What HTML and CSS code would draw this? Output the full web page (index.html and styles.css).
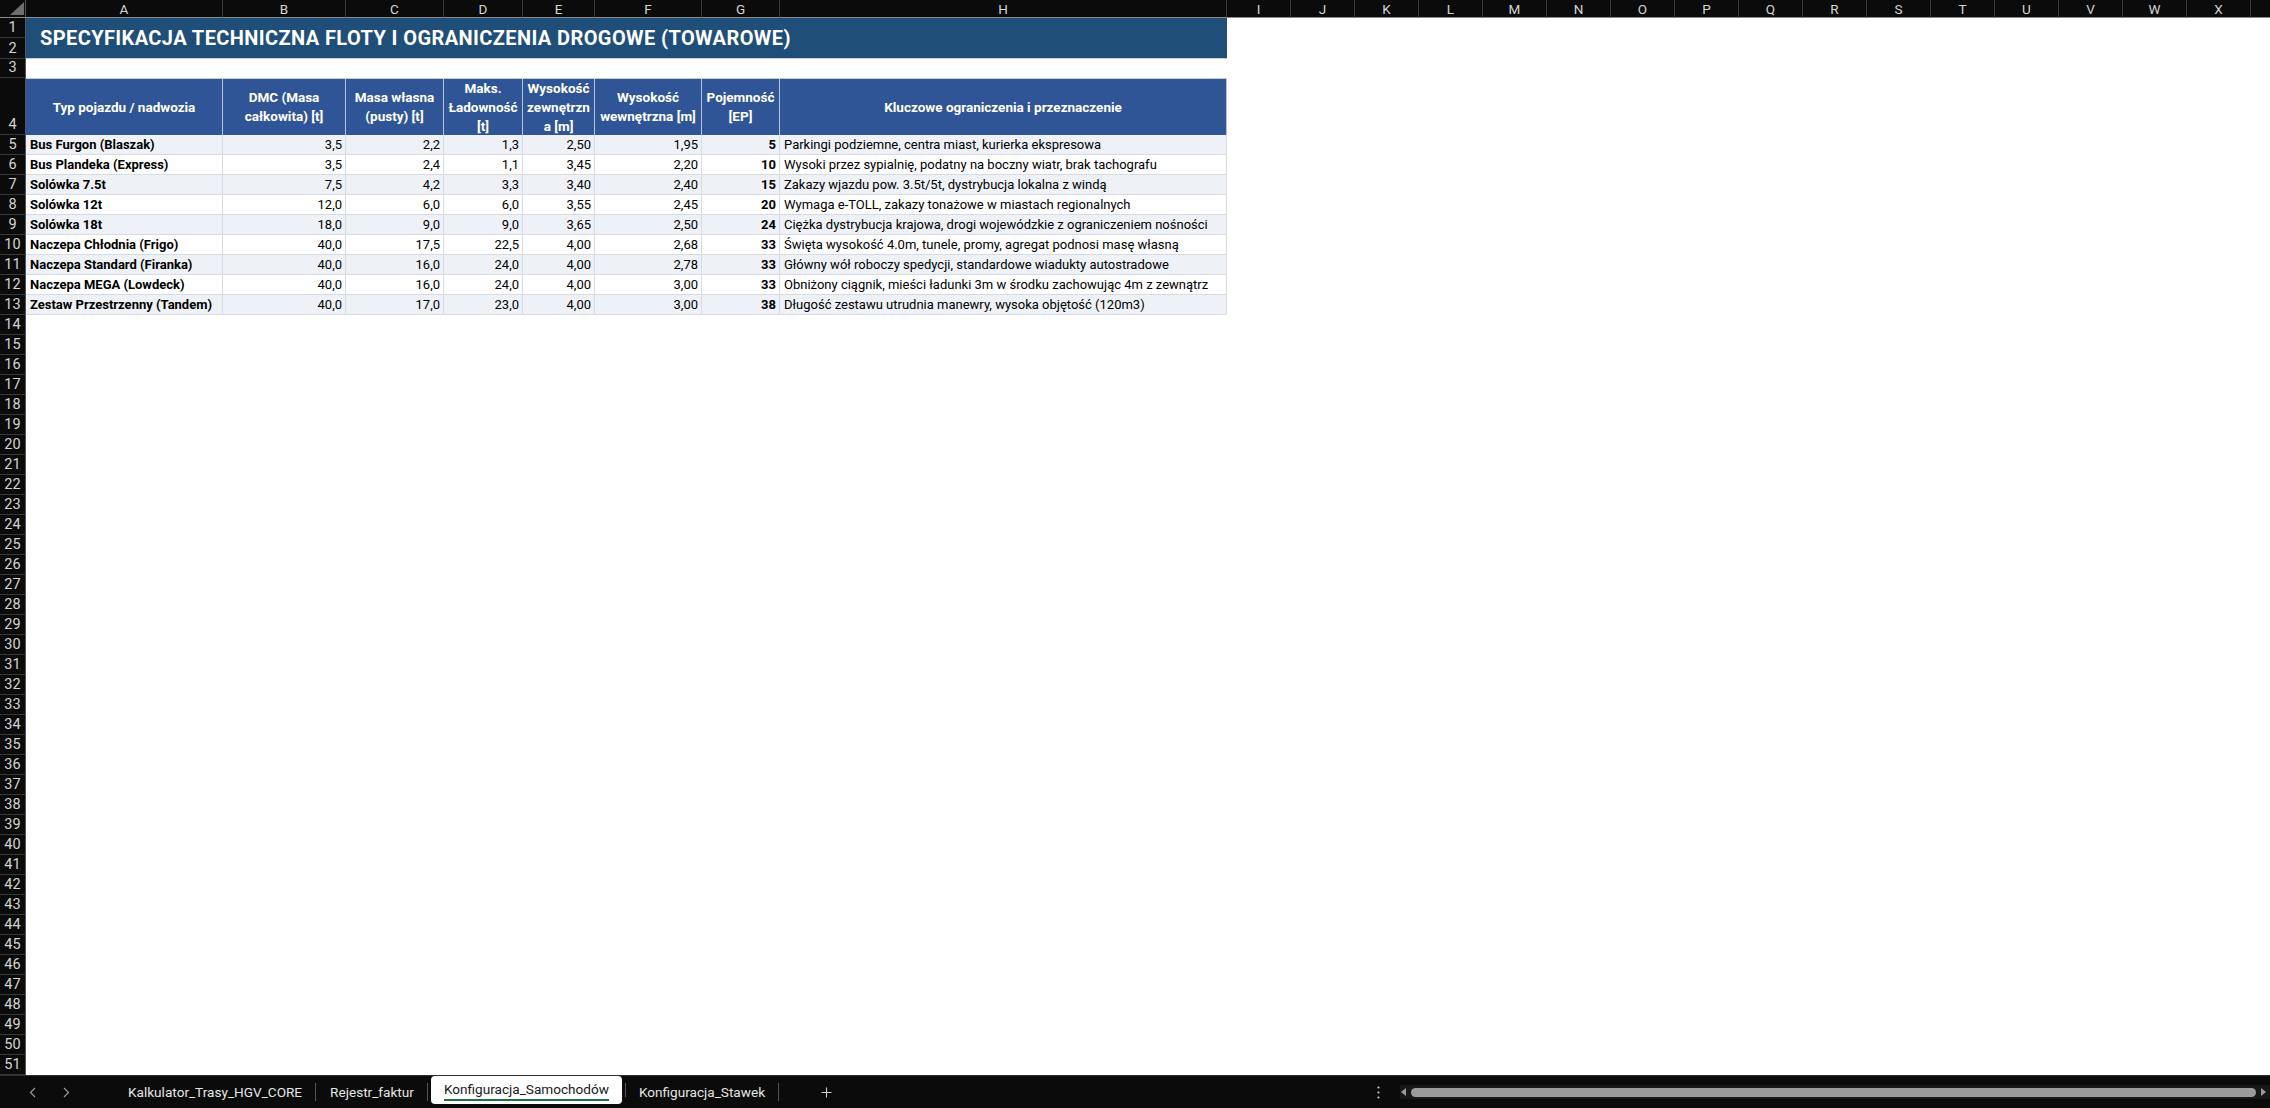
FILE: index.html
```html
<!DOCTYPE html>
<html lang="pl">
<head>
    <meta charset="UTF-8">
    <meta name="viewport" content="width=device-width, initial-scale=1.0">
    <title>Konfiguracja_Samochodów</title>
    <link rel="stylesheet" href="styles.css">
</head>
<body>
    <div class="app">
        <div class="sheet">
            <!-- naglowki kolumn -->
            <div class="corner">
                <svg width="14" height="13" viewBox="0 0 14 13"><polygon points="14,0 14,13 0,13" fill="#6d6d6d"/></svg>
            </div>
            <div class="ch">A</div>
            <div class="ch">B</div>
            <div class="ch">C</div>
            <div class="ch">D</div>
            <div class="ch">E</div>
            <div class="ch">F</div>
            <div class="ch">G</div>
            <div class="ch">H</div>
            <div class="ch">I</div>
            <div class="ch">J</div>
            <div class="ch">K</div>
            <div class="ch">L</div>
            <div class="ch">M</div>
            <div class="ch">N</div>
            <div class="ch">O</div>
            <div class="ch">P</div>
            <div class="ch">Q</div>
            <div class="ch">R</div>
            <div class="ch">S</div>
            <div class="ch">T</div>
            <div class="ch">U</div>
            <div class="ch">V</div>
            <div class="ch">W</div>
            <div class="ch">X</div>
            <div class="ch ch-end"></div>

            <!-- tytul -->
            <div class="row">
                <div class="rh">1</div>
                <div class="title">SPECYFIKACJA TECHNICZNA FLOTY I OGRANICZENIA DROGOWE (TOWAROWE)</div>
                <div class="fill"></div>
            </div>
            <div class="row">
                <div class="rh">2</div>
                <div class="fill"></div>
            </div>
            <div class="row">
                <div class="rh">3</div>
                <div class="fill wide"></div>
            </div>

            <!-- naglowek tabeli -->
            <div class="row">
                <div class="rh">4</div>
                <div class="hd">Typ pojazdu / nadwozia</div>
                <div class="hd">DMC (Masa<br>całkowita) [t]</div>
                <div class="hd">Masa własna<br>(pusty) [t]</div>
                <div class="hd">Maks.<br>Ładowność<br>[t]</div>
                <div class="hd">Wysokość<br>zewnętrzn<br>a [m]</div>
                <div class="hd">Wysokość<br>wewnętrzna [m]</div>
                <div class="hd">Pojemność<br>[EP]</div>
                <div class="hd">Kluczowe ograniczenia i przeznaczenie</div>
                <div class="fill"></div>
            </div>

            <!-- dane -->
            <div class="row alt">
                <div class="rh">5</div>
                <div class="c b">Bus Furgon (Blaszak)</div>
                <div class="c n">3,5</div>
                <div class="c n">2,2</div>
                <div class="c n">1,3</div>
                <div class="c n">2,50</div>
                <div class="c n">1,95</div>
                <div class="c n b">5</div>
                <div class="c">Parkingi podziemne, centra miast, kurierka ekspresowa</div>
                <div class="fill"></div>
            </div>
            <div class="row">
                <div class="rh">6</div>
                <div class="c b">Bus Plandeka (Express)</div>
                <div class="c n">3,5</div>
                <div class="c n">2,4</div>
                <div class="c n">1,1</div>
                <div class="c n">3,45</div>
                <div class="c n">2,20</div>
                <div class="c n b">10</div>
                <div class="c">Wysoki przez sypialnię, podatny na boczny wiatr, brak tachografu</div>
                <div class="fill"></div>
            </div>
            <div class="row alt">
                <div class="rh">7</div>
                <div class="c b">Solówka 7.5t</div>
                <div class="c n">7,5</div>
                <div class="c n">4,2</div>
                <div class="c n">3,3</div>
                <div class="c n">3,40</div>
                <div class="c n">2,40</div>
                <div class="c n b">15</div>
                <div class="c">Zakazy wjazdu pow. 3.5t/5t, dystrybucja lokalna z windą</div>
                <div class="fill"></div>
            </div>
            <div class="row">
                <div class="rh">8</div>
                <div class="c b">Solówka 12t</div>
                <div class="c n">12,0</div>
                <div class="c n">6,0</div>
                <div class="c n">6,0</div>
                <div class="c n">3,55</div>
                <div class="c n">2,45</div>
                <div class="c n b">20</div>
                <div class="c">Wymaga e-TOLL, zakazy tonażowe w miastach regionalnych</div>
                <div class="fill"></div>
            </div>
            <div class="row alt">
                <div class="rh">9</div>
                <div class="c b">Solówka 18t</div>
                <div class="c n">18,0</div>
                <div class="c n">9,0</div>
                <div class="c n">9,0</div>
                <div class="c n">3,65</div>
                <div class="c n">2,50</div>
                <div class="c n b">24</div>
                <div class="c">Ciężka dystrybucja krajowa, drogi wojewódzkie z ograniczeniem nośności</div>
                <div class="fill"></div>
            </div>
            <div class="row">
                <div class="rh">10</div>
                <div class="c b">Naczepa Chłodnia (Frigo)</div>
                <div class="c n">40,0</div>
                <div class="c n">17,5</div>
                <div class="c n">22,5</div>
                <div class="c n">4,00</div>
                <div class="c n">2,68</div>
                <div class="c n b">33</div>
                <div class="c">Święta wysokość 4.0m, tunele, promy, agregat podnosi masę własną</div>
                <div class="fill"></div>
            </div>
            <div class="row alt">
                <div class="rh">11</div>
                <div class="c b">Naczepa Standard (Firanka)</div>
                <div class="c n">40,0</div>
                <div class="c n">16,0</div>
                <div class="c n">24,0</div>
                <div class="c n">4,00</div>
                <div class="c n">2,78</div>
                <div class="c n b">33</div>
                <div class="c">Główny wół roboczy spedycji, standardowe wiadukty autostradowe</div>
                <div class="fill"></div>
            </div>
            <div class="row">
                <div class="rh">12</div>
                <div class="c b">Naczepa MEGA (Lowdeck)</div>
                <div class="c n">40,0</div>
                <div class="c n">16,0</div>
                <div class="c n">24,0</div>
                <div class="c n">4,00</div>
                <div class="c n">3,00</div>
                <div class="c n b">33</div>
                <div class="c">Obniżony ciągnik, mieści ładunki 3m w środku zachowując 4m z zewnątrz</div>
                <div class="fill"></div>
            </div>
            <div class="row alt">
                <div class="rh">13</div>
                <div class="c b">Zestaw Przestrzenny (Tandem)</div>
                <div class="c n">40,0</div>
                <div class="c n">17,0</div>
                <div class="c n">23,0</div>
                <div class="c n">4,00</div>
                <div class="c n">3,00</div>
                <div class="c n b">38</div>
                <div class="c">Długość zestawu utrudnia manewry, wysoka objętość (120m3)</div>
                <div class="fill"></div>
            </div>

            <!-- puste wiersze -->
            <div class="rh">14</div><div class="fill wide"></div>
            <div class="rh">15</div><div class="fill wide"></div>
            <div class="rh">16</div><div class="fill wide"></div>
            <div class="rh">17</div><div class="fill wide"></div>
            <div class="rh">18</div><div class="fill wide"></div>
            <div class="rh">19</div><div class="fill wide"></div>
            <div class="rh">20</div><div class="fill wide"></div>
            <div class="rh">21</div><div class="fill wide"></div>
            <div class="rh">22</div><div class="fill wide"></div>
            <div class="rh">23</div><div class="fill wide"></div>
            <div class="rh">24</div><div class="fill wide"></div>
            <div class="rh">25</div><div class="fill wide"></div>
            <div class="rh">26</div><div class="fill wide"></div>
            <div class="rh">27</div><div class="fill wide"></div>
            <div class="rh">28</div><div class="fill wide"></div>
            <div class="rh">29</div><div class="fill wide"></div>
            <div class="rh">30</div><div class="fill wide"></div>
            <div class="rh">31</div><div class="fill wide"></div>
            <div class="rh">32</div><div class="fill wide"></div>
            <div class="rh">33</div><div class="fill wide"></div>
            <div class="rh">34</div><div class="fill wide"></div>
            <div class="rh">35</div><div class="fill wide"></div>
            <div class="rh">36</div><div class="fill wide"></div>
            <div class="rh">37</div><div class="fill wide"></div>
            <div class="rh">38</div><div class="fill wide"></div>
            <div class="rh">39</div><div class="fill wide"></div>
            <div class="rh">40</div><div class="fill wide"></div>
            <div class="rh">41</div><div class="fill wide"></div>
            <div class="rh">42</div><div class="fill wide"></div>
            <div class="rh">43</div><div class="fill wide"></div>
            <div class="rh">44</div><div class="fill wide"></div>
            <div class="rh">45</div><div class="fill wide"></div>
            <div class="rh">46</div><div class="fill wide"></div>
            <div class="rh">47</div><div class="fill wide"></div>
            <div class="rh">48</div><div class="fill wide"></div>
            <div class="rh">49</div><div class="fill wide"></div>
            <div class="rh">50</div><div class="fill wide"></div>
            <div class="rh">51</div><div class="fill wide"></div>
        </div>

        <!-- karty arkuszy -->
        <div class="tabbar">
            <div class="nav">
                <svg width="7" height="11" viewBox="0 0 7 11"><polyline points="6,1 1.5,5.5 6,10" fill="none" stroke="#9a9a9a" stroke-width="1.2"/></svg>
                <svg width="7" height="11" viewBox="0 0 7 11"><polyline points="1,1 5.5,5.5 1,10" fill="none" stroke="#9a9a9a" stroke-width="1.2"/></svg>
            </div>
            <div class="tab">Kalkulator_Trasy_HGV_CORE</div>
            <div class="tab">Rejestr_faktur</div>
            <div class="tab active"><span class="tab-label">Konfiguracja_Samochodów</span></div>
            <div class="tab">Konfiguracja_Stawek</div>
            <div class="add">
                <svg width="11" height="11" viewBox="0 0 11 11"><path d="M5.5 0.5v10M0.5 5.5h10" stroke="#cfcfcf" stroke-width="1.1"/></svg>
            </div>
            <div class="dots">
                <svg width="3" height="13" viewBox="0 0 3 13"><circle cx="1.5" cy="1.5" r="1.1" fill="#d0d0d0"/><circle cx="1.5" cy="6.5" r="1.1" fill="#d0d0d0"/><circle cx="1.5" cy="11.5" r="1.1" fill="#d0d0d0"/></svg>
            </div>
            <div class="hscroll">
                <svg width="5" height="8" viewBox="0 0 5 8"><polygon points="5,0 5,8 0,4" fill="#9a9a9a"/></svg>
                <div class="thumb"></div>
                <svg width="5" height="8" viewBox="0 0 5 8"><polygon points="0,0 0,8 5,4" fill="#9a9a9a"/></svg>
            </div>
        </div>
    </div>
</body>
</html>
```

FILE: styles.css
```css
:root {
    --head-bg: #0b0b0b;
    --head-text: #d4d4d4;
    --head-line: #383838;
    --title-bg: #1f4e79;
    --table-head: #2f5597;
    --grid-line: #d7dce3;
    --stripe: #eef2f7;
}

* {
    margin: 0;
    padding: 0;
    box-sizing: border-box;
}

body {
    font-family: Roboto, 'Liberation Sans', sans-serif;
    background-color: var(--head-bg);
    overflow: hidden;
}

.app {
    display: flex;
    flex-direction: column;
    height: 100vh;
}

.sheet {
    flex: 1;
    display: grid;
    grid-template-columns: 26px 197px 123px 98px 79px 72px 107px 78px 447px repeat(16, 64px) 1fr;
    grid-template-rows: 18px 20px 21px 19px 57px;
    grid-auto-rows: 20px;
    align-content: start;
    background-color: #fff;
    overflow: hidden;
}

.row {
    display: contents;
}

/* naglowki kolumn i wierszy */
.corner {
    background-color: var(--head-bg);
    border-right: 1px solid #555;
    border-bottom: 1px solid #8c8c8c;
    display: flex;
    align-items: flex-end;
    justify-content: flex-end;
    padding: 0 1px 2px 0;
}

.ch {
    background-color: var(--head-bg);
    color: var(--head-text);
    font-size: 13.5px;
    display: flex;
    align-items: center;
    justify-content: center;
    border-right: 1px solid var(--head-line);
    border-bottom: 1px solid #8c8c8c;
}

.ch-end {
    border-right: none;
}

.rh {
    grid-column: 1;
    background-color: var(--head-bg);
    color: var(--head-text);
    font-size: 14.5px;
    line-height: 18px;
    display: flex;
    align-items: flex-end;
    justify-content: center;
    border-right: 1px solid #555;
    border-bottom: 1px solid var(--head-line);
}

.fill {
    grid-column: 10 / -1;
}

.fill.wide {
    grid-column: 2 / -1;
}

/* tytul */
.title {
    grid-column: 2 / 10;
    grid-row: span 2;
    background-color: var(--title-bg);
    color: #fff;
    font-weight: 700;
    font-size: 20px;
    letter-spacing: 0.4px;
    display: flex;
    align-items: center;
    padding-left: 14px;
    border-bottom: 1px solid #c9d0da;
}

/* tabela */
.hd {
    background-color: var(--table-head);
    color: #fff;
    font-weight: 700;
    font-size: 13.5px;
    line-height: 19px;
    text-align: center;
    white-space: nowrap;
    display: flex;
    align-items: center;
    justify-content: center;
    border-top: 1px solid #c3cde0;
    border-right: 1px solid #b4c2dc;
}

.c {
    font-size: 13px;
    line-height: 19px;
    color: #000;
    padding: 0 3px 0 4px;
    white-space: nowrap;
    border-right: 1px solid var(--grid-line);
    border-bottom: 1px solid var(--grid-line);
}

.row.alt .c {
    background-color: var(--stripe);
}

.n {
    text-align: right;
}

.b {
    font-weight: 700;
}

/* karty */
.tabbar {
    height: 33px;
    display: flex;
    align-items: stretch;
    background-color: var(--head-bg);
    border-top: 1px solid #2e2e2e;
    color: #e6e6e6;
    font-size: 13.6px;
}

.nav {
    width: 114px;
    display: flex;
    align-items: center;
    gap: 27px;
    padding-left: 29px;
}

.tab {
    position: relative;
    display: flex;
    align-items: center;
    padding: 0 14px;
    white-space: nowrap;
}

.tab::after {
    content: '';
    position: absolute;
    right: 0;
    top: 7px;
    bottom: 7px;
    width: 1px;
    background-color: #555;
}

.tab.active {
    background-color: #fff;
    color: #1a1a1a;
    padding: 0 13px;
    margin: 0 3px 4px;
    border-radius: 4px;
}

.tab.active::after {
    right: -4px;
}

.tab-label {
    padding-top: 2px;
    padding-bottom: 2px;
    border-bottom: 2px solid #217346;
}

.add {
    width: 94px;
    display: flex;
    align-items: center;
    justify-content: center;
}

.dots {
    margin-left: auto;
    margin-right: 9px;
    width: 22px;
    display: flex;
    align-items: center;
    justify-content: center;
}

.hscroll {
    width: 870px;
    height: 14px;
    align-self: center;
    margin-left: 2px;
    display: flex;
    align-items: center;
    gap: 5px;
    padding: 0 4px 0 1px;
    background-color: #181818;
}

.thumb {
    flex: 1;
    height: 9px;
    border-radius: 5px;
    background-color: #9b9b9b;
}
```
